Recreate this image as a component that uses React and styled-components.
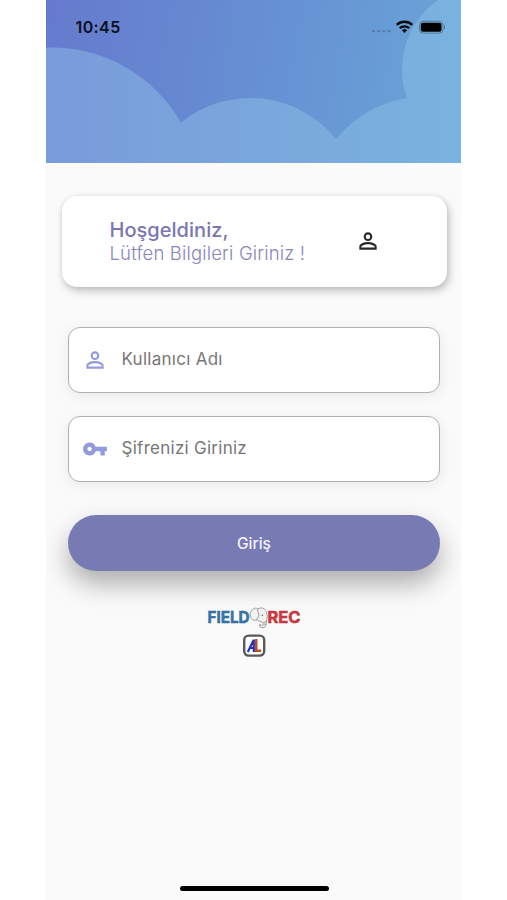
import React from "react";
import styled, { createGlobalStyle } from "styled-components";
import { MdPersonOutline, MdVpnKey } from "react-icons/md";

const GlobalStyle = createGlobalStyle`
  * { box-sizing: border-box; }
  body { margin: 0; background: #fff; font-family: Inter, "Liberation Sans", sans-serif; }
`;

const Phone = styled.main`
  width: 415px;
  height: 900px;
  margin-left: 46px;
  background: #fafafa;
  display: flex;
  flex-direction: column;
  overflow: hidden;
`;

const Header = styled.header`
  position: relative;
  height: 163px;
  flex: none;
  background: linear-gradient(100deg, #667acd 0%, #6688d1 34%, #6694d4 60%, #6aa6d8 100%);
`;

const Clouds = styled.svg`
  position: absolute;
  inset: 0;
`;

const StatusBar = styled.div`
  position: relative;
  height: 53px;
  padding: 0 16px 0 29.5px;
  display: flex;
  justify-content: space-between;
  align-items: center;
`;

const Clock = styled.span`
  font-size: 16px;
  font-weight: 600;
  line-height: 20px;
  letter-spacing: 0.4px;
  color: #071020;
`;

const Welcome = styled.section`
  width: 385px;
  height: 91px;
  margin: 33px 0 0 15.5px;
  padding: 0 66px 2px 48px;
  flex: none;
  display: flex;
  align-items: center;
  justify-content: space-between;
  border-radius: 15px;
  background: #fff;
  color: #292929;
  box-shadow: 2px 4px 8px rgba(0, 0, 0, 0.23), 0 0 5px rgba(0, 0, 0, 0.07);
`;

const Greeting = styled.h1`
  margin: 0;
  font-size: 20px;
  font-weight: 500;
  line-height: 24px;
  letter-spacing: 0.03px;
  color: #7a76b5;
`;

const Hint = styled.p`
  margin: 0;
  font-size: 18.5px;
  font-weight: 300;
  line-height: 22px;
  letter-spacing: 0.16px;
  color: #8884c0;
`;

const Form = styled.form`
  display: flex;
  flex-direction: column;
  gap: 23px;
  padding: 40px 21px 0 22px;
`;

const Field = styled.label`
  height: 66px;
  padding-left: 13px;
  display: flex;
  align-items: center;
  gap: 13.5px;
  border: 1.5px solid #b0b0b0;
  border-radius: 12px;
  background: #fff;
  color: #949bdc;
  box-shadow: 0 3px 14px rgba(0, 0, 0, 0.07);

  svg { flex: none; }
`;

const Input = styled.input`
  width: 280px;
  padding: 0 0 2px;
  border: 0;
  outline: 0;
  background: transparent;
  font: 400 17px Inter, "Liberation Sans", sans-serif;
  letter-spacing: 0.27px;

  &::placeholder { color: #777; opacity: 1; }
`;

const Submit = styled.button`
  height: 56px;
  margin-top: 10px;
  padding: 0;
  border: 0;
  border-radius: 28px;
  background: #777ab3;
  color: #f4f4ff;
  font: 500 15.5px Inter, "Liberation Sans", sans-serif;
  box-shadow: 0 13px 26px rgba(0, 0, 0, 0.31);
`;

const Brands = styled.footer`
  display: flex;
  flex-direction: column;
  align-items: center;
  padding-top: 36px;
  gap: 5px;

  svg { display: block; }
`;

const HomeIndicator = styled.div`
  width: 149px;
  height: 5px;
  margin: auto 0 9px 133.5px;
  flex: none;
  border-radius: 3px;
  background: #000;
`;

function StatusIcons() {
  return (
    <svg width="75" height="16" viewBox="0 0 75 16">
      <g fill="#547cab">
        <rect x="2" y="11" width="3" height="2.3" rx=".8" />
        <rect x="7.2" y="11" width="3" height="2.3" rx=".8" />
        <rect x="12.4" y="11" width="3" height="2.3" rx=".8" />
        <rect x="17.6" y="11" width="3" height="2.3" rx=".8" />
      </g>
      <g fill="none" stroke="#05080d" strokeWidth="2.3">
        <path d="M26.7 5.9A11.2 11.2 0 0 1 42.3 5.9" />
        <path d="M29.7 9.2A7 7 0 0 1 39.3 9.2" />
      </g>
      <path d="M34.5 14L31.9 11.3A3.8 3.8 0 0 1 37.1 11.3Z" fill="#05080d" />
      <rect x="49.5" y="2.3" width="23.5" height="11.8" rx="3.5" fill="none" stroke="#527994" />
      <rect x="50.8" y="3.7" width="20.7" height="9" rx="2" />
      <path d="M74 6v4q1.3-.5 1.3-2T74 6" fill="#527994" />
    </svg>
  );
}

function FieldRecLogo() {
  return (
    <svg width="94" height="22" viewBox="0 0 94 22" fontFamily="Inter, sans-serif" fontWeight="700" fontSize="15.5">
      <text x="0.6" y="15.8" textLength="42" lengthAdjust="spacingAndGlyphs" fill="#3979ad" stroke="#285f8f" strokeWidth=".5">FIELD</text>
      <text x="60.5" y="15.8" textLength="33" lengthAdjust="spacingAndGlyphs" fill="#cf3940" stroke="#b72f37" strokeWidth=".5">REC</text>
      <g fill="#f2f2f1" stroke="#858585" strokeWidth=".8" strokeLinejoin="round">
        <path d="M44.5 4C46 1 49 .5 51 2C54 0 58 1 59.2 4.5C61.2 9 59.8 12 59.3 15.5C59.5 18 58.5 20.8 56 20.8C53.5 21 52.3 19.5 52.6 17.6L54 17.8C54.2 19 56.2 18.8 56.3 17.2C56.4 15.7 55 14.7 52.2 14.2C51 13.9 50.7 12.5 49.5 13C47 14 44 12.3 43.2 9.4C42.7 7.2 43.2 5.2 44.5 4Z" />
        <path d="M51 2C49.5 4 51.7 5.2 51.8 7.5C51.9 9.5 50.5 11 49.5 13M56.5 15.3L59 14.8M56.7 17.3L59 17.1" fill="none" />
      </g>
      <circle cx="55.3" cy="8.3" r=".75" fill="#555" />
    </svg>
  );
}

function AlLogo() {
  return (
    <svg width="24" height="24" viewBox="0 0 24 24">
      <rect x="2.2" y="1.6" width="20" height="20" rx="4.5" fill="#fff" stroke="#595959" strokeWidth="2.4" />
      <path d="M5.8 18L11.8 5.8V18M8 14H12" fill="none" stroke="#2630c0" strokeWidth="2.2" />
      <path d="M14.2 5V16.8H19.2" fill="none" stroke="#b85022" strokeWidth="2.6" />
    </svg>
  );
}

export default function App() {
  return (
    <>
      <GlobalStyle />
      <Phone>
        <Header>
          <Clouds width="415" height="163" viewBox="0 0 415 163">
            <defs>
              <linearGradient id="cloud" x1="0" x2="1">
                <stop stopColor="#799bda" />
                <stop offset=".55" stopColor="#7aa8dc" />
                <stop offset="1" stopColor="#79b3df" />
              </linearGradient>
            </defs>
            <path fill="url(#cloud)" d="M0 47.5A150 150 0 0 1 135 122.5A110 110 0 0 1 290 139A114 114 0 0 1 361 98A85 85 0 0 1 392 0H415V163H0Z" />
          </Clouds>
          <StatusBar>
            <Clock>10:45</Clock>
            <StatusIcons />
          </StatusBar>
        </Header>
        <Welcome>
          <div>
            <Greeting>Hoşgeldiniz,</Greeting>
            <Hint>Lütfen Bilgileri Giriniz !</Hint>
          </div>
          <MdPersonOutline size={26} />
        </Welcome>
        <Form onSubmit={(e) => e.preventDefault()}>
          <Field>
            <MdPersonOutline size={26} />
            <Input placeholder="Kullanıcı Adı" />
          </Field>
          <Field>
            <MdVpnKey size={26} />
            <Input type="password" placeholder="Şifrenizi Giriniz" />
          </Field>
          <Submit type="submit">Giriş</Submit>
        </Form>
        <Brands>
          <FieldRecLogo />
          <AlLogo />
        </Brands>
        <HomeIndicator />
      </Phone>
    </>
  );
}
